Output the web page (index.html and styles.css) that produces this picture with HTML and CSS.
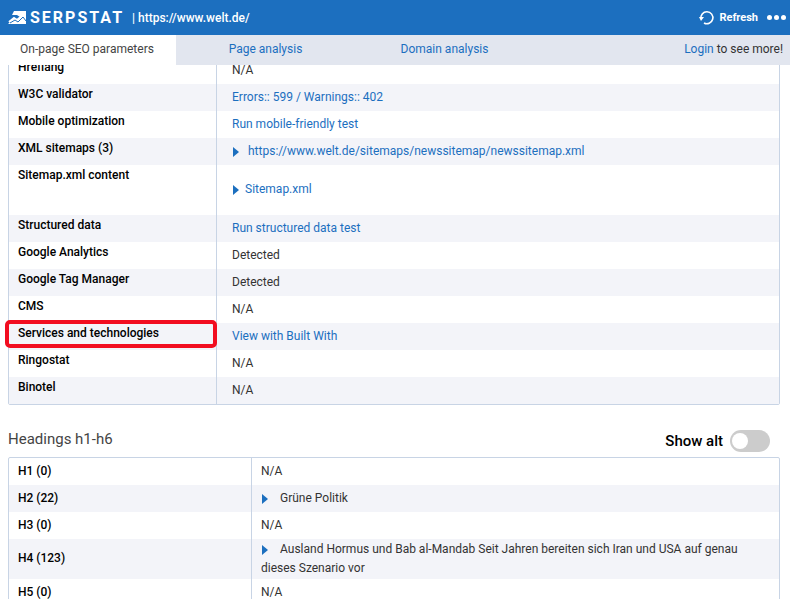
FILE: index.html
```html
<!DOCTYPE html>
<html lang="en">
<head>
    <meta charset="UTF-8">
    <meta name="viewport" content="width=device-width, initial-scale=1.0">
    <title>Serpstat | On-page SEO parameters</title>
    <link rel="stylesheet" href="styles.css">
</head>
<body>
    <header class="topbar">
        <a href="#" class="logo">
            <svg class="logo-mark" viewBox="0 0 19 14" aria-hidden="true">
                <path d="M6 0H18V13H0L3 10L7 7L10 9L12 6L9 4H4Z" fill="#fff"/>
                <path d="M1 11L6 7L9 9L15 4" fill="none" stroke="#fff" stroke-width="2"/>
                <path d="M2 12L7 9L10 11L15 6L18 10" fill="none" stroke="#1c6fbf" stroke-width="1"/>
            </svg>
            <span class="logo-text">SERPSTAT</span>
        </a>
        <span class="site-url">| https://www.welt.de/</span>
        <button class="refresh-btn">
            <svg class="refresh-icon" viewBox="0 0 16 16" aria-hidden="true">
                <path d="M2 9A6 6 0 1 1 5 13" fill="none" stroke="#fff" stroke-width="1.6"/>
                <path d="M0 7H5L2 11Z" fill="#fff"/>
            </svg>
            Refresh
        </button>
        <button class="more-btn" aria-label="More">
            <span class="dot"></span>
            <span class="dot"></span>
            <span class="dot"></span>
        </button>
    </header>

    <nav class="tabs">
        <a href="#" class="tab active">On-page SEO parameters</a>
        <a href="#" class="tab">Page analysis</a>
        <a href="#" class="tab">Domain analysis</a>
        <p class="login"><a href="#">Login</a> to see more!</p>
    </nav>

    <main class="content">
        <table class="params-table">
            <tr>
                <th scope="row">Hreflang</th>
                <td>N/A</td>
            </tr>
            <tr>
                <th scope="row">W3C validator</th>
                <td><a href="#">Errors:: 599 / Warnings:: 402</a></td>
            </tr>
            <tr>
                <th scope="row">Mobile optimization</th>
                <td><a href="#">Run mobile-friendly test</a></td>
            </tr>
            <tr>
                <th scope="row">XML sitemaps (3)</th>
                <td><span class="arrow"></span><a href="#">https://www.welt.de/sitemaps/newssitemap/newssitemap.xml</a></td>
            </tr>
            <tr class="tall">
                <th scope="row">Sitemap.xml content</th>
                <td><span class="arrow near"></span><a href="#">Sitemap.xml</a></td>
            </tr>
            <tr>
                <th scope="row">Structured data</th>
                <td><a href="#">Run structured data test</a></td>
            </tr>
            <tr>
                <th scope="row">Google Analytics</th>
                <td>Detected</td>
            </tr>
            <tr>
                <th scope="row">Google Tag Manager</th>
                <td>Detected</td>
            </tr>
            <tr>
                <th scope="row">CMS</th>
                <td>N/A</td>
            </tr>
            <tr>
                <th scope="row" class="marked">Services and technologies</th>
                <td><a href="#">View with Built With</a></td>
            </tr>
            <tr>
                <th scope="row">Ringostat</th>
                <td>N/A</td>
            </tr>
            <tr>
                <th scope="row">Binotel</th>
                <td>N/A</td>
            </tr>
        </table>

        <div class="section-header">
            <h2>Headings h1-h6</h2>
            <label class="alt-toggle">
                Show alt
                <input type="checkbox" class="switch">
            </label>
        </div>

        <table class="headings-table">
            <tr>
                <th scope="row">H1 (0)</th>
                <td>N/A</td>
            </tr>
            <tr>
                <th scope="row">H2 (22)</th>
                <td><span class="arrow"></span>Grüne Politik</td>
            </tr>
            <tr>
                <th scope="row">H3 (0)</th>
                <td>N/A</td>
            </tr>
            <tr>
                <th scope="row">H4 (123)</th>
                <td><span class="arrow"></span>Ausland Hormus und Bab al-Mandab Seit Jahren bereiten sich Iran und USA auf genau dieses Szenario vor</td>
            </tr>
            <tr>
                <th scope="row">H5 (0)</th>
                <td>N/A</td>
            </tr>
        </table>
    </main>
</body>
</html>
```
FILE: styles.css
```css
* {
    margin: 0;
    padding: 0;
    box-sizing: border-box;
}

body {
    display: flex;
    flex-direction: column;
    height: 100vh;
    overflow: hidden;
    background-color: #fff;
    color: #333;
    font-family: Roboto, "Liberation Sans", sans-serif;
    font-size: 12px;
}

a {
    color: #1c6fbf;
    text-decoration: none;
}

button {
    border: none;
    background: none;
    color: #fff;
    font-family: inherit;
    cursor: pointer;
}

/* Top bar */
.topbar {
    display: flex;
    flex-shrink: 0;
    align-items: center;
    height: 35px;
    padding: 0 4px 0 8px;
    background-color: #1c6fbf;
    color: #fff;
}

.logo {
    display: flex;
    align-items: center;
    gap: 3px;
    color: #fff;
}

.logo-mark {
    width: 19px;
    height: 14px;
}

.logo-text {
    font-size: 16px;
    font-weight: 700;
    letter-spacing: 2px;
}

.site-url {
    margin-left: 8px;
    font-weight: 500;
}

.refresh-btn {
    display: flex;
    align-items: center;
    gap: 4px;
    margin-left: auto;
    font-size: 11px;
    font-weight: 700;
}

.refresh-icon {
    width: 16px;
    height: 16px;
}

.more-btn {
    display: flex;
    gap: 2px;
    margin-left: 9px;
}

.dot {
    width: 5px;
    height: 5px;
    border-radius: 50%;
    background-color: #fff;
}

/* Tabs */
.tabs {
    display: flex;
    flex-shrink: 0;
    height: 30px;
    padding-right: 7px;
    background-color: #e2e6ef;
    line-height: 28px;
}

.tab {
    width: 179px;
    text-align: center;
}

.tab.active {
    width: 176px;
    padding-right: 2px;
    background-color: #fff;
    color: #444;
}

.login {
    margin-left: auto;
}

/* Tables */
.content {
    flex: 1;
    min-height: 0;
    overflow: hidden;
    padding: 0 10px 0 8px;
}

table {
    width: 100%;
    border: 1px solid #c8d4e5;
    border-radius: 2px;
    border-spacing: 0;
}

tr:nth-child(even) {
    background-color: #f3f4f9;
}

th {
    border-right: 1px solid #c8d4e5;
    color: #000;
    font-weight: 500;
    text-align: left;
}

/* the list is scrolled a little under the tabs */
.params-table {
    margin-top: -9px;
}

.params-table th {
    width: 208px;
    padding: 0 9px 7px;
    line-height: 20px;
    vertical-align: top;
}

.params-table td {
    padding: 0 15px 2px;
    line-height: 24px;
}

.params-table .tall {
    height: 50px;
}

.headings-table th {
    width: 243px;
    height: 27px;
    padding: 0 9px 2px;
}

.headings-table td {
    padding: 1px 9px;
    line-height: 19px;
}

.arrow {
    display: inline-block;
    margin: 0 12px -2px 1px;
    border: 5px solid transparent;
    border-left: 6px solid #1c6fbf;
    border-right: none;
}

.params-table .arrow {
    margin-right: 9px;
}

.params-table .arrow.near {
    margin-right: 6px;
}

/* Highlight frame around a row label */
.marked {
    position: relative;
}

.marked::after {
    content: "";
    position: absolute;
    top: -3px;
    right: -1px;
    bottom: 2px;
    left: -4px;
    border: 4px solid #f20d20;
    border-radius: 5px;
}

/* Headings section */
.section-header {
    display: flex;
    align-items: center;
    justify-content: space-between;
    height: 52px;
    padding: 20px 10px 0 0;
}

.section-header h2 {
    margin-bottom: 4px;
    color: #444;
    font-size: 15px;
    font-weight: 400;
}

.alt-toggle {
    display: flex;
    align-items: center;
    gap: 7px;
    color: #000;
    font-size: 15px;
    font-weight: 500;
}

.switch {
    appearance: none;
    width: 40px;
    height: 22px;
    padding: 3px 2px;
    border-radius: 11px;
    background-color: #ccc;
    cursor: pointer;
}

.switch::before {
    content: "";
    display: block;
    width: 16px;
    height: 16px;
    border-radius: 50%;
    background-color: #fff;
}

.switch:checked {
    background-color: #1c6fbf;
}

.switch:checked::before {
    margin-left: auto;
}
```
